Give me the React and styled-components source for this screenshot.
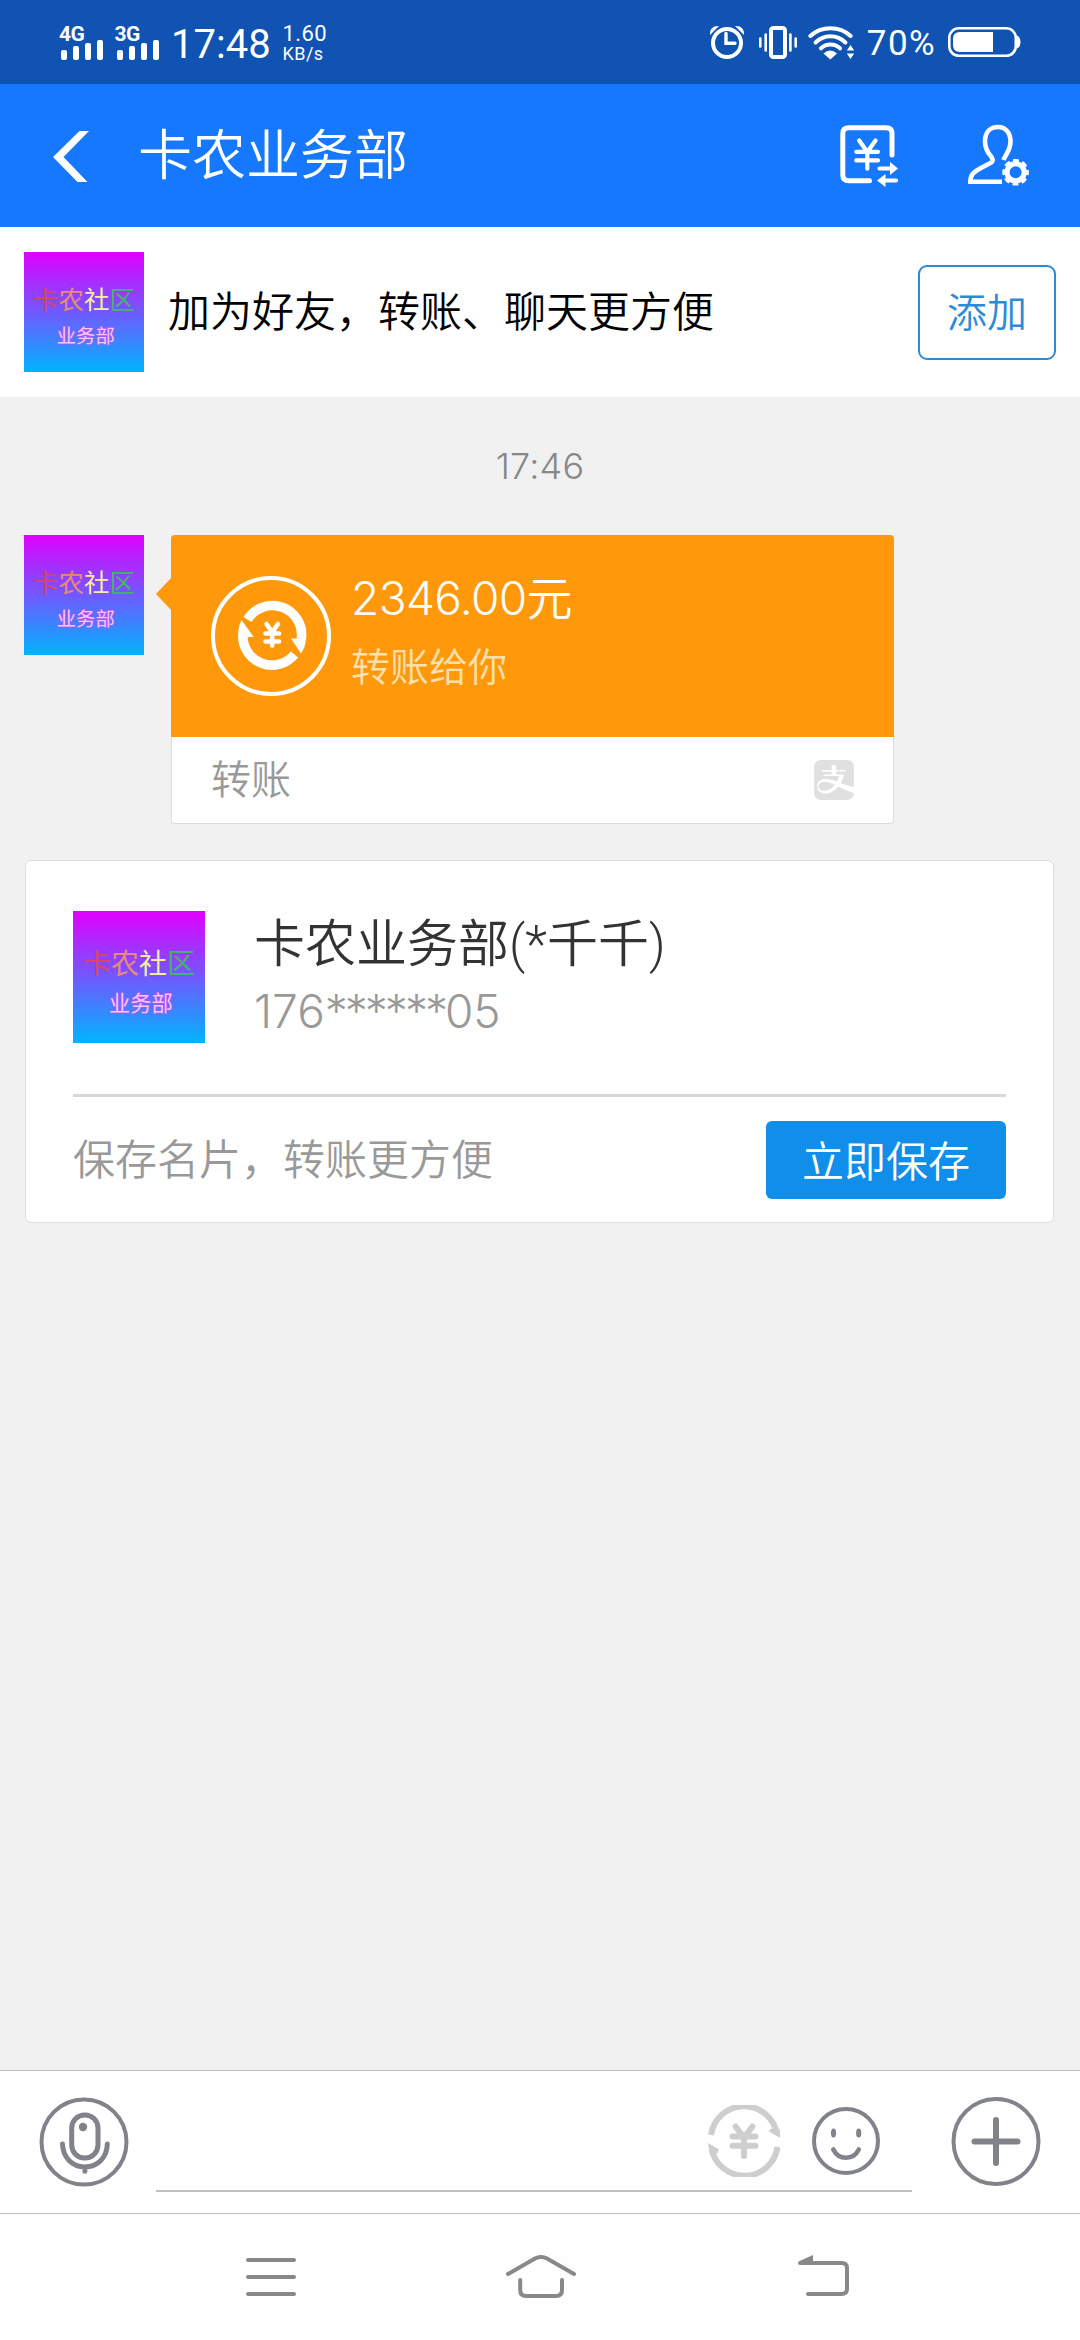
import React, { useState } from "react";
import styled, { createGlobalStyle } from "styled-components";
import { SiAlipay } from "react-icons/si";

const App = () => {
  const [message, setMessage] = useState("");

  return (
    <Wrapper>
      <GlobalStyle />
      <StatusBar>
        <StatusGroup>
          <Signal label="4G" />
          <Signal label="3G" />
          <Clock>17:48</Clock>
          <NetSpeed>
            <p className="speed">1.60</p>
            <p className="unit">KB/s</p>
          </NetSpeed>
        </StatusGroup>
        <StatusGroup>
          <AlarmIcon />
          <VibrateIcon />
          <WifiIcon />
          <BatteryText>70%</BatteryText>
          <BatteryIcon />
        </StatusGroup>
      </StatusBar>

      <Header>
        <HeaderLeft>
          <BackIcon />
          <Title>卡农业务部</Title>
        </HeaderLeft>
        <HeaderRight>
          <TransferRecordIcon />
          <UserSettingIcon />
        </HeaderRight>
      </Header>

      <FriendBar>
        <ProfileImage size={120} />
        <p>加为好友，转账、聊天更方便</p>
        <AddButton type="button">添加</AddButton>
      </FriendBar>

      <ChatArea>
        <ChatTime>17:46</ChatTime>
        <MessageRow>
          <ProfileImage size={120} />
          <TransferBubble>
            <TransferMain>
              <TransferIcon />
              <TransferInfo>
                <p className="amount">2346.00元</p>
                <p className="memo">转账给你</p>
              </TransferInfo>
            </TransferMain>
            <TransferFooter>
              <p>转账</p>
              <SiAlipay />
            </TransferFooter>
          </TransferBubble>
        </MessageRow>

        <ContactCard>
          <ContactInfo>
            <ProfileImage size={132} />
            <div>
              <p className="contact-name">卡农业务部(*千千)</p>
              <p className="contact-phone">
                176<span>******</span>05
              </p>
            </div>
          </ContactInfo>
          <ContactActions>
            <p>保存名片，转账更方便</p>
            <SaveButton type="button">立即保存</SaveButton>
          </ContactActions>
        </ContactCard>
      </ChatArea>

      <InputBar>
        <MicIcon />
        <InputField>
          <input
            value={message}
            onChange={(e) => setMessage(e.target.value)}
          />
          <YenIcon />
          <SmileIcon />
        </InputField>
        <PlusIcon />
      </InputBar>

      <NavBar>
        <MenuIcon />
        <HomeIcon />
        <ReturnIcon />
      </NavBar>
    </Wrapper>
  );
};

export default App;

const Signal = ({ label }) => (
  <SignalWrapper>
    <p>{label}</p>
    <div>
      {[10, 14, 17, 20].map((height) => (
        <SignalBar key={height} $height={height} />
      ))}
    </div>
  </SignalWrapper>
);

const logoText = [
  { char: "卡", color: "#d8455f" },
  { char: "农", color: "#e98a74" },
  { char: "社", color: "#f6ee9c" },
  { char: "区", color: "#45b36b" },
];

const ProfileImage = ({ size }) => (
  <Profile $size={size}>
    <p className="community">
      {logoText.map(({ char, color }) => (
        <LogoChar key={char} $color={color}>
          {char}
        </LogoChar>
      ))}
    </p>
    <p className="department">业务部</p>
  </Profile>
);

const AlarmIcon = () => (
  <Icon $width={36} $height={35} $stroke={4} viewBox="708 25 36 35">
    <circle cx="726" cy="43" r="14" />
    <path d="M725 33.5V43.2H734" strokeWidth="3.4" />
    <path d="M709 35C708.5 29 712 25.5 718 26" className="fill" />
    <path d="M743 35C743.5 29 740 25.5 734 26" className="fill" />
  </Icon>
);

const VibrateIcon = () => (
  <Icon $width={40} $height={35} $stroke={4} viewBox="757 25 40 35">
    <rect x="770" y="28" width="14" height="29" rx="2.5" />
    <path
      d="M759.3 38.5V46.5M764.7 34.5V50.5M789.4 34.5V50.5M794.7 38.5V46.5"
      strokeWidth="2.6"
    />
  </Icon>
);

const WifiIcon = () => (
  <Icon $width={48} $height={35} $stroke={4} viewBox="806 24 48 35">
    <path d="M809.3 35C820.5 24.6 838.5 24.6 849.7 35" />
    <path d="M814.6 41.5C823 33.3 836 33.3 844.4 41.5" />
    <path d="M820 47.3C825.5 42.3 833.5 42.3 839 47.3" />
    <path d="M822.5 52.5Q829.3 46.5 836 52.5L829.3 58.5Z" className="fill" />
    <path
      d="M845.8 49.5L849.5 44L853.2 49.5ZM845.8 52.5L849.5 58L853.2 52.5Z"
      className="fill"
    />
  </Icon>
);

const BatteryIcon = () => (
  <Icon $width={74} $height={32} $stroke={2.6} viewBox="947 26 74 32">
    <rect x="949.3" y="28.3" width="66.5" height="27.5" rx="9.5" />
    <path
      d="M993 32H960Q953 32 953 39V45Q953 52 960 52H993Z"
      className="fill"
    />
    <path d="M1017 35.5Q1020.5 37 1020.5 42T1017 48.5Z" className="fill" />
  </Icon>
);

const BackIcon = () => (
  <Icon $width={38} $height={52} $stroke={0} viewBox="52 129 38 52">
    <path
      d="M79.5 130H89L63.5 156L87.5 181H77.5L53 156Z"
      className="fill"
    />
  </Icon>
);

const TransferRecordIcon = () => (
  <Icon $width={60} $height={66} $stroke={5} viewBox="839 123 60 66">
    <path d="M892 155V133.5Q892 127.8 886 127.8H849Q842.8 127.8 842.8 133.5V175Q842.8 180.8 849 180.8H869.5" />
    <path
      d="M859.2 140.5L867.3 152L875.5 140.5M867.3 152V168.7M856.3 151.8H878M856.3 160.4H878"
      strokeWidth="4.2"
    />
    <path d="M879.5 168.5H890M896 180.5H886" strokeWidth="4.2" />
    <path
      d="M890 162L898 168.5L890 175ZM885.5 174L877 180.5L885.5 187Z"
      className="fill"
    />
  </Icon>
);

const UserSettingIcon = () => (
  <Icon $width={64} $height={66} $stroke={4.6} viewBox="967 123 64 66">
    <path
      d="M1003.5 160C1005 155 1010.5 151 1010.5 141.5C1010.5 132 1005 127 998 127C990.5 127 985 132 985 141.5C985 150 989 154 991.5 157C993.5 160 993 162 989.5 163.5L980 168.5C973 172.5 970.3 175 970.3 181.8H1002"
      strokeLinecap="butt"
    />
    <circle cx="1015.6" cy="172.3" r="8.6" strokeWidth="5.2" />
    <circle
      cx="1015.6"
      cy="172.3"
      r="11.5"
      strokeWidth="3.6"
      strokeLinecap="butt"
      strokeDasharray="5.6 3.43"
      strokeDashoffset="2.8"
    />
  </Icon>
);

const TransferIcon = () => (
  <Icon $width={120} $height={120} $stroke={4} viewBox="211 576 120 120">
    <circle cx="271" cy="636" r="58" />
    <g strokeWidth="9.6" strokeLinecap="butt">
      <path d="M247.5 619.5A29.2 29.2 0 0 1 301.3 639" />
      <path d="M294.5 654.5A29.2 29.2 0 0 1 242.8 635" />
    </g>
    <path d="M291 638.5H306Q305.5 647 301 653.5Z" className="fill" />
    <path d="M253.7 637H238Q238 627 241.5 620Z" className="fill" />
    <path
      d="M266.5 624L272.2 632L278 624M272.2 632V645.5M265.5 633.5H279M265.5 641.5H279"
      strokeWidth="4.6"
    />
  </Icon>
);

const MicIcon = () => (
  <Icon
    $width={90}
    $height={90}
    $stroke={5}
    $color="#808389"
    viewBox="39 2096.5 90 90"
  >
    <circle cx="84" cy="2141.5" r="42.5" strokeWidth="4" />
    <rect x="71.7" y="2114.5" width="26.3" height="43" rx="13" />
    <circle cx="83" cy="2126.5" r="4.2" className="fill" />
    <path d="M62.5 2143.5C63 2157 72 2166.5 84.9 2166.5S107 2157 107.3 2143.5M84.9 2167V2170.8" />
  </Icon>
);

const YenIcon = () => (
  <Icon
    $width={72}
    $height={72}
    $stroke={6}
    $color="#cecece"
    viewBox="708 2106 72 72"
  >
    <g strokeLinecap="butt">
      <path d="M711 2136A33.4 33.4 0 0 1 777 2135" />
      <path d="M777.5 2148A33.4 33.4 0 0 1 711.5 2149" />
    </g>
    <path d="M768.5 2132L775 2127L780 2131V2139Z" className="fill" />
    <path d="M708 2144L719 2150.5L717.5 2154L710 2156Z" className="fill" />
    <path d="M735.5 2127.5L744 2138.5L752.5 2127.5M744 2138V2157M732.5 2137.5H755.5M732.5 2146.7H755.5" />
  </Icon>
);

const SmileIcon = () => (
  <Icon
    $width={68}
    $height={68}
    $stroke={4}
    $color="#808389"
    viewBox="812 2108 68 68"
  >
    <circle cx="846" cy="2142" r="32" />
    <ellipse cx="833.5" cy="2134" rx="2.6" ry="4.6" className="fill" />
    <ellipse cx="858.7" cy="2134" rx="2.6" ry="4.6" className="fill" />
    <path
      d="M833.3 2150.5C836 2156 840 2158.7 846 2158.7S856 2156 858.8 2150.5"
      strokeWidth="4.6"
    />
  </Icon>
);

const PlusIcon = () => (
  <Icon
    $width={90}
    $height={90}
    $stroke={4}
    $color="#808389"
    viewBox="951 2096.5 90 90"
  >
    <circle cx="996" cy="2141" r="42.5" />
    <path d="M974.5 2141H1017.5M996 2119.5V2162.5" strokeWidth="6" />
  </Icon>
);

const MenuIcon = () => (
  <Icon
    $width={50}
    $height={44}
    $stroke={4}
    $color="#888"
    viewBox="246 2255 50 44"
  >
    <path d="M248 2260H294M248 2277H294M248 2294H294" />
  </Icon>
);

const HomeIcon = () => (
  <Icon
    $width={70}
    $height={44}
    $stroke={4}
    $color="#888"
    viewBox="506 2255 70 44"
  >
    <path d="M508 2274L535 2258.5Q541 2255.5 547 2258.5L574 2274" />
    <path d="M520.2 2280V2290Q520.2 2296 526 2296H556Q562 2296 562 2290V2280" />
  </Icon>
);

const ReturnIcon = () => (
  <Icon
    $width={52}
    $height={44}
    $stroke={4}
    $color="#888"
    viewBox="798 2255 52 44"
  >
    <path d="M800 2263H841.5Q847 2263 847 2268V2289Q847 2294 841.5 2294H808" />
    <path d="M798.5 2261.5L813 2255V2263Z" className="fill" />
  </Icon>
);

const GlobalStyle = createGlobalStyle`
  * {
    box-sizing: border-box;
  }
  body {
    margin: 0;
    font-family: Roboto, "Noto Sans CJK SC", sans-serif;
    font-weight: 350;
  }
  p {
    margin: 0;
    white-space: nowrap;
  }
  button,
  input {
    font-family: inherit;
    font-weight: inherit;
  }
`;

const numberFont = `Inter, "Noto Sans CJK SC", sans-serif`;

const Wrapper = styled.div`
  width: 1080px;
  height: 2340px;
  display: flex;
  flex-direction: column;
  background-color: #f1f1f1;
  overflow: hidden;
`;

const Icon = styled.svg`
  flex: none;
  display: block;
  width: ${(props) => props.$width}px;
  height: ${(props) => props.$height}px;
  color: ${(props) => props.$color || "#fff"};
  fill: none;
  stroke: currentColor;
  stroke-width: ${(props) => props.$stroke};
  stroke-linecap: round;

  .fill {
    fill: currentColor;
    stroke: none;
  }
`;

const StatusBar = styled.div`
  height: 84px;
  padding: 0 59px;
  display: flex;
  justify-content: space-between;
  background-color: #1053b2;
  color: #fff;
`;

const StatusGroup = styled.div`
  display: flex;
  align-items: center;

  ${Icon}:nth-child(2) {
    margin-left: 13px;
  }
  ${Icon}:nth-child(3) {
    margin-left: 9px;
  }
`;

const SignalWrapper = styled.div`
  width: 55.5px;
  padding-top: 2px;

  p {
    font-size: 21px;
    font-weight: 700;
    line-height: 17px;
    letter-spacing: -0.5px;
  }
  div {
    height: 20px;
    margin-top: -3px;
    padding-left: 2px;
    display: flex;
    align-items: flex-end;
    gap: 6px;
  }
`;

const SignalBar = styled.span`
  width: 6px;
  height: ${(props) => props.$height}px;
  border-radius: 2px;
  background-color: #fff;
`;

const Clock = styled.p`
  margin-left: 1px;
  padding-top: 4px;
  font-size: 40px;
  font-weight: 400;
`;

const NetSpeed = styled.div`
  margin: 2px 0 0 12px;
  font-weight: 400;

  .speed {
    font-size: 22px;
    line-height: 20px;
    letter-spacing: 0.4px;
  }
  .unit {
    font-size: 18px;
    line-height: 19px;
    letter-spacing: 0.4px;
  }
`;

const BatteryText = styled.p`
  margin: 3px 11px 0 12px;
  font-size: 35px;
  font-weight: 400;
  letter-spacing: 1.4px;
`;

const Header = styled.div`
  height: 143px;
  padding: 0 49px 0 52px;
  display: flex;
  align-items: center;
  justify-content: space-between;
  background-color: #1677ff;
  color: #fff;
`;

const HeaderLeft = styled.div`
  display: flex;
  align-items: center;
  gap: 48px;
`;

const HeaderRight = styled.div`
  display: flex;
  align-items: center;
  gap: 68px;
`;

const Title = styled.p`
  padding-top: 3px;
  font-size: 54px;
  line-height: 60px;
`;

const FriendBar = styled.div`
  height: 170px;
  padding: 0 24px;
  display: flex;
  align-items: center;
  background-color: #fff;
  color: #000;

  > p {
    flex: 1;
    margin-left: 24px;
    padding-top: 2px;
    font-size: 42px;
    line-height: 60px;
  }
`;

const Profile = styled.div`
  flex: none;
  width: ${(props) => props.$size}px;
  height: ${(props) => props.$size}px;
  padding-top: 0.292em;
  display: flex;
  flex-direction: column;
  align-items: center;
  background: linear-gradient(#e000ff, #7c50ff 45%, #00b4ff);
  font-size: ${(props) => props.$size}px;
  font-weight: 400;

  .community {
    font-size: 0.212em;
    line-height: 1.1;
  }
  .department {
    margin-top: 0.51em;
    padding-left: 0.18em;
    font-size: 0.161em;
    line-height: 1.2;
    color: #ffc4ff;
    text-shadow: 0 0 3px #ff2bf0;
  }
`;

const LogoChar = styled.span`
  color: ${(props) => props.$color};
`;

const AddButton = styled.button`
  width: 138px;
  height: 95px;
  padding: 0 0 5px;
  border: 2px solid #2c8bd4;
  border-radius: 9px;
  background-color: #fff;
  color: #2c8bd4;
  font-size: 40px;
`;

const ChatArea = styled.div`
  flex: 1;
  padding: 48px 24px 0;
`;

const ChatTime = styled.p`
  height: 90px;
  font-family: ${numberFont};
  font-size: 36px;
  line-height: 42px;
  letter-spacing: 0.2px;
  text-align: center;
  color: #888;
`;

const MessageRow = styled.div`
  display: flex;
  gap: 27px;
`;

const TransferBubble = styled.div`
  position: relative;
  width: 723px;
  height: 289px;

  &:before {
    content: "";
    position: absolute;
    top: 42px;
    left: -15px;
    border: 17px solid transparent;
    border-left-width: 0;
    border-right: 16px solid #ff980a;
  }
`;

const TransferMain = styled.div`
  height: 202px;
  padding-left: 40px;
  display: flex;
  align-items: center;
  gap: 20px;
  border-radius: 4px 4px 0 0;
  background-color: #ff980a;
`;

const TransferInfo = styled.div`
  margin-top: -7px;

  .amount {
    font-family: ${numberFont};
    font-size: 46px;
    line-height: 66px;
    letter-spacing: -0.6px;
    color: #fff;
  }
  .memo {
    margin-top: 4px;
    font-size: 39px;
    line-height: 66px;
    color: #ffe0ad;
  }
`;

const TransferFooter = styled.div`
  height: 87px;
  padding: 0 39px;
  display: flex;
  align-items: center;
  justify-content: space-between;
  border: 1px solid #ddd;
  border-top: 0;
  border-radius: 0 0 4px 4px;
  background-color: #fff;
  font-size: 40px;
  color: #999;

  p {
    padding-bottom: 6px;
  }
  svg {
    width: 40px;
    height: 40px;
    color: #e0e0e0;
  }
`;

const ContactCard = styled.div`
  width: 1029px;
  height: 363px;
  margin: 36px 0 0 1px;
  padding: 0 47px;
  border: 1px solid #ddd;
  border-radius: 6px;
  background-color: #fff;
`;

const ContactInfo = styled.div`
  height: 236px;
  padding-top: 50px;
  display: flex;
  gap: 49px;
  border-bottom: 3px solid #d8d8d8;

  .contact-name {
    font-size: 51px;
    line-height: 67px;
    color: #333;
  }
  .contact-phone {
    font-family: ${numberFont};
    font-size: 46px;
    line-height: 67px;
    color: #999;

    span {
      letter-spacing: -3px;
    }
  }
`;

const ContactActions = styled.div`
  height: 125px;
  display: flex;
  align-items: center;
  justify-content: space-between;
  font-size: 42px;
  color: #999;

  > p {
    padding-bottom: 6px;
  }
`;

const SaveButton = styled.button`
  width: 240px;
  height: 78px;
  padding: 0 0 2px;
  border: 0;
  border-radius: 6px;
  background-color: #108ee9;
  color: #fff;
  font-size: 42px;
`;

const InputBar = styled.div`
  height: 144px;
  padding: 0 39px;
  display: flex;
  align-items: center;
  justify-content: space-between;
  border-top: 1px solid #c0c0c0;
  border-bottom: 1px solid #c0c0c0;
  background-color: #fff;
`;

const InputField = styled.div`
  width: 756px;
  height: 100px;
  margin: 0 12px 0 0;
  padding-right: 32px;
  display: flex;
  align-items: center;
  gap: 32px;
  border-bottom: 2px solid #bfbfbf;

  input {
    flex: 1;
    min-width: 0;
    border: 0;
    outline: none;
    background: none;
    font-size: 42px;
  }
`;

const NavBar = styled.div`
  height: 126px;
  padding: 0 230px 0 246px;
  display: flex;
  align-items: center;
  justify-content: space-between;
  background-color: #fefefe;

  ${Icon}:nth-child(2) {
    margin-right: 12px;
  }
`;
